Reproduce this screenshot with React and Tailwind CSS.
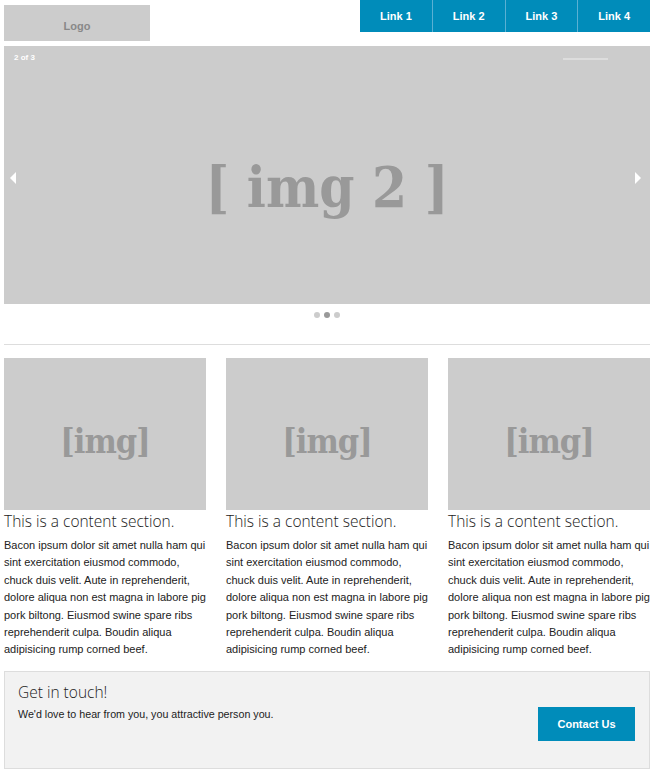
import React from "react";

const links = ["Link 1", "Link 2", "Link 3", "Link 4"];

const body =
  "Bacon ipsum dolor sit amet nulla ham qui sint exercitation eiusmod commodo, chuck duis velit. Aute in reprehenderit, dolore aliqua non est magna in labore pig pork biltong. Eiusmod swine spare ribs reprehenderit culpa. Boudin aliqua adipisicing rump corned beef.";

const ContentCard = () => (
  <div className="flex flex-col">
    <div className="h-[152px] bg-[#cccccc] flex items-center justify-center">
      <span className="mt-[14px] font-['DejaVu_Serif',serif] font-stretch-condensed font-bold text-[34px] text-[#999999] tracking-[-1px]">
        [img]
      </span>
    </div>
    <h3 className="mt-[1px] font-['Open_Sans',sans-serif] font-light text-[15.5px] leading-[20px] text-[#222222]">
      This is a content section.
    </h3>
    <p className="mt-[6px] font-['Liberation_Sans',sans-serif] text-[11px] leading-[17.4px] text-[#222222]">
      {body}
    </p>
  </div>
);

export default function App() {
  return (
    <div className="w-[655px] bg-white pl-[4px] pr-[5px] pb-[5px] font-['Liberation_Sans',sans-serif]">
      {/* Header */}
      <div className="flex items-start justify-between">
        <div className="mt-[5px] w-[146px] h-[36px] bg-[#cccccc] flex items-center justify-center">
          <span className="mt-[6px] font-['Liberation_Sans',sans-serif] font-stretch-condensed text-[11px] text-[#888888] font-bold">
            Logo
          </span>
        </div>
        <nav className="flex h-[32px] w-[290px] bg-[#008cba]">
          {links.map((l, i) => (
            <a
              key={l}
              className={`flex-1 flex items-center justify-center text-white text-[11px] font-bold ${
                i > 0 ? "border-l border-[#5ab0d3]" : ""
              }`}
            >
              {l}
            </a>
          ))}
        </nav>
      </div>

      {/* Slider */}
      <div className="relative mt-[5px] h-[258px] bg-[#cccccc] flex items-center justify-center">
        <span className="absolute left-[10px] top-[6px] text-white text-[8px] font-bold">2 of 3</span>
        <span className="absolute right-[42px] top-[12px] w-[45px] h-[2px] bg-[#dddddd]" />
        <svg className="absolute left-[6px] top-[126px]" width="6" height="12" viewBox="0 0 6 12">
          <path d="M6 0 L0 6 L6 12 Z" fill="#ffffff" />
        </svg>
        <svg className="absolute right-[9px] top-[126px]" width="6" height="12" viewBox="0 0 6 12">
          <path d="M0 0 L6 6 L0 12 Z" fill="#ffffff" />
        </svg>
        <span className="mt-[24px] font-['DejaVu_Serif',serif] font-stretch-condensed font-bold text-[56px] text-[#999999] tracking-[0px]">
          [ img 2 ]
        </span>
      </div>
      <div className="flex justify-center gap-[4px] mt-[8px]">
        <span className="w-[6px] h-[6px] rounded-full bg-[#cccccc]" />
        <span className="w-[6px] h-[6px] rounded-full bg-[#999999]" />
        <span className="w-[6px] h-[6px] rounded-full bg-[#cccccc]" />
      </div>

      <hr className="mt-[26px] border-t border-[#dddddd]" />

      {/* Content */}
      <div className="grid grid-cols-3 gap-[20px] mt-[13px]">
        <ContentCard />
        <ContentCard />
        <ContentCard />
      </div>

      {/* Callout */}
      <div className="mt-[12px] h-[98px] bg-[#f2f2f2] border border-[#dddddd] flex items-start justify-between pl-[13px] pr-[14px]">
        <div className="pt-[9px]">
          <h4 className="font-['Open_Sans',sans-serif] font-light text-[15.5px] leading-[22px] text-[#222222]">
            Get in touch!
          </h4>
          <p className="mt-[3px] text-[10.7px] text-[#222222]">
            We'd love to hear from you, you attractive person you.
          </p>
        </div>
        <a className="mt-[35px] w-[97px] h-[34px] bg-[#008cba] flex items-center justify-center text-white text-[11px] font-bold">
          Contact Us
        </a>
      </div>
    </div>
  );
}
